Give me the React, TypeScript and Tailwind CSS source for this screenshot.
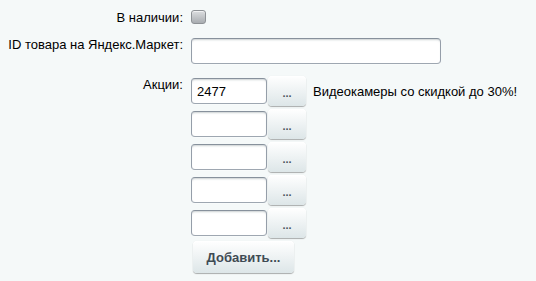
import React from "react";

const font = { fontFamily: '"Liberation Sans", Arial, sans-serif' };

const inputCls =
  "h-[26px] rounded-[4px] border border-[#959ea9] border-t-[#87919c] border-b-[#9ea7b1] bg-white px-[5px] text-[13px] text-black outline-none shadow-[inset_0_2px_2px_-1px_rgba(180,188,191,0.7),0_1px_0_0_rgba(255,255,255,0.3)]";

const btnCls =
  "rounded-[4px] bg-gradient-to-b from-[#ffffff] to-[#dde6e8] text-[#3f4b54] font-bold text-[13px] shadow-[0_0_1px_rgba(0,0,0,0.11),0_1px_1px_rgba(0,0,0,0.3),inset_0_1px_#fff]";

const promos = ["2477", "", "", "", ""];

const App: React.FC = () => {
  return (
    <div className="w-[536px] h-[281px] bg-[#f5f9f9] text-[13px] leading-[15px] text-black" style={font}>
      <div className="grid grid-cols-[183px_1fr] gap-x-2 pt-[10px]">
        <div className="text-right">В наличии:</div>
        <div>
          <div className="w-[15px] h-[14px] rounded-[3px] border border-[#8e9296] bg-gradient-to-b from-[#dcdee0] to-[#a9adb1] shadow-[inset_0_1px_0_rgba(255,255,255,0.6)]" />
        </div>

        <div className="text-right mt-[12px]">ID товара на Яндекс.Маркет:</div>
        <div className="mt-[13px]">
          <input className={`${inputCls} w-[250px] block`} defaultValue="" />
        </div>

        <div className="text-right mt-[13px]">Акции:</div>
        <div className="mt-[12px] flex flex-col gap-[3px]">
          {promos.map((v, i) => (
            <div key={i} className="flex items-center h-[30px]">
              <input className={`${inputCls} w-[76px] block`} defaultValue={v} />
              <button className={`${btnCls} ml-px w-[38px] h-[30px] flex items-center justify-center pt-1`}>
                <span className="text-[11px] leading-none font-bold text-[#4a545c]">...</span>
              </button>
              {v && <span className="ml-[7px]">Видеокамеры со скидкой до 30%!</span>}
            </div>
          ))}
          <div>
            <button className={`${btnCls} ml-[2px] w-[101px] h-[32px]`}>Добавить...</button>
          </div>
        </div>
      </div>
    </div>
  );
};

export default App;
